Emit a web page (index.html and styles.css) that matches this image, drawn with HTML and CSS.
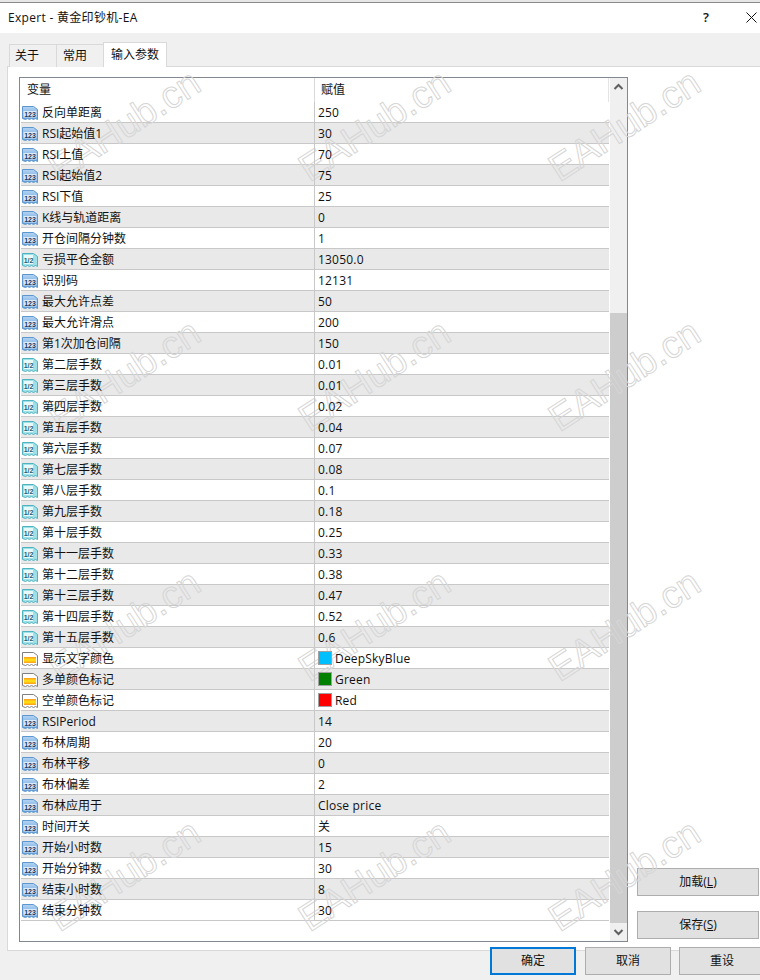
FILE: index.html
```html
<!DOCTYPE html>
<html lang="zh-CN">

<head>
    <meta charset="UTF-8">
    <meta name="viewport" content="width=device-width, initial-scale=1.0">
    <title>Expert - 黄金印钞机-EA</title>
    <link rel="stylesheet" href="styles.css">
</head>

<body>
    <svg class="defs" width="0" height="0">
        <defs>
            <linearGradient id="blue" x1="0" y1="0" x2="0" y2="1">
                <stop offset="0" stop-color="#b5d4f2" />
                <stop offset="1" stop-color="#5b9ad9" />
            </linearGradient>
            <linearGradient id="flame" x1="0" y1="0" x2="0" y2="1">
                <stop offset="0" stop-color="#ff9a1e" />
                <stop offset=".5" stop-color="#ffe812" />
                <stop offset="1" stop-color="#ff9a1e" />
            </linearGradient>
            <symbol id="i-int" viewBox="0 0 16 16">
                <path d="M.5 1.500h11l4 3v10l-2-1-2 1-2-1-2 1-2-1-2 1-3-1z" fill="url(#blue)" stroke="#5e96cf" />
                <rect x="1.500" y="6" width="13" height="6.500" fill="#dcebfa" />
                <text x="8" y="11.700" class="icon-txt icon-int">123</text>
            </symbol>
            <symbol id="i-dbl" viewBox="0 0 16 16">
                <path d="M.5 1.500h11l4 3v10l-2-1-2 1-2-1-2 1-2-1-2 1-3-1z" fill="#9fdfe6" stroke="#4fb2c0" />
                <rect x="2" y="3" width="9" height="9" fill="#e6f9fb" />
                <text x="6.500" y="10.500" class="icon-txt icon-dbl">1/2</text>
            </symbol>
            <symbol id="i-clr" viewBox="0 0 16 16">
                <path d="M.5 1.500h11l4 3v10l-2-1-2 1-2-1-2 1-2-1-2 1-3-1z" fill="#fff" stroke="#808080" />
                <rect x="2" y="6" width="12" height="6" fill="url(#flame)" />
            </symbol>
        </defs>
    </svg>

    <div class="dialog">
        <div class="topline"></div>
        <div class="titlebar">
            <span class="title">Expert - 黄金印钞机-EA</span>
            <span class="help">?</span>
            <svg class="close" width="11" height="11" viewBox="0 0 11 11">
                <path d="M.5.500l10 10M10.500.500l-10 10" stroke="#111" fill="none" />
            </svg>
        </div>

        <div class="tabs">
            <div class="tab">关于</div>
            <div class="tab">常用</div>
            <div class="tab active">输入参数</div>
        </div>

        <div class="panel">
            <div class="list">
                <div class="table">
                    <div class="thead">
                        <div class="th th-name">变量</div>
                        <div class="th th-val">赋值</div>
                    </div>
                    <div class="row"><div class="name"><svg class="ico"><use href="#i-int" /></svg>反向单距离</div><div class="val">250</div></div>
                    <div class="row"><div class="name"><svg class="ico"><use href="#i-int" /></svg>RSI起始值1</div><div class="val">30</div></div>
                    <div class="row"><div class="name"><svg class="ico"><use href="#i-int" /></svg>RSI上值</div><div class="val">70</div></div>
                    <div class="row"><div class="name"><svg class="ico"><use href="#i-int" /></svg>RSI起始值2</div><div class="val">75</div></div>
                    <div class="row"><div class="name"><svg class="ico"><use href="#i-int" /></svg>RSI下值</div><div class="val">25</div></div>
                    <div class="row"><div class="name"><svg class="ico"><use href="#i-int" /></svg>K线与轨道距离</div><div class="val">0</div></div>
                    <div class="row"><div class="name"><svg class="ico"><use href="#i-int" /></svg>开仓间隔分钟数</div><div class="val">1</div></div>
                    <div class="row"><div class="name"><svg class="ico"><use href="#i-dbl" /></svg>亏损平仓金额</div><div class="val">13050.0</div></div>
                    <div class="row"><div class="name"><svg class="ico"><use href="#i-int" /></svg>识别码</div><div class="val">12131</div></div>
                    <div class="row"><div class="name"><svg class="ico"><use href="#i-int" /></svg>最大允许点差</div><div class="val">50</div></div>
                    <div class="row"><div class="name"><svg class="ico"><use href="#i-int" /></svg>最大允许滑点</div><div class="val">200</div></div>
                    <div class="row"><div class="name"><svg class="ico"><use href="#i-int" /></svg>第1次加仓间隔</div><div class="val">150</div></div>
                    <div class="row"><div class="name"><svg class="ico"><use href="#i-dbl" /></svg>第二层手数</div><div class="val">0.01</div></div>
                    <div class="row"><div class="name"><svg class="ico"><use href="#i-dbl" /></svg>第三层手数</div><div class="val">0.01</div></div>
                    <div class="row"><div class="name"><svg class="ico"><use href="#i-dbl" /></svg>第四层手数</div><div class="val">0.02</div></div>
                    <div class="row"><div class="name"><svg class="ico"><use href="#i-dbl" /></svg>第五层手数</div><div class="val">0.04</div></div>
                    <div class="row"><div class="name"><svg class="ico"><use href="#i-dbl" /></svg>第六层手数</div><div class="val">0.07</div></div>
                    <div class="row"><div class="name"><svg class="ico"><use href="#i-dbl" /></svg>第七层手数</div><div class="val">0.08</div></div>
                    <div class="row"><div class="name"><svg class="ico"><use href="#i-dbl" /></svg>第八层手数</div><div class="val">0.1</div></div>
                    <div class="row"><div class="name"><svg class="ico"><use href="#i-dbl" /></svg>第九层手数</div><div class="val">0.18</div></div>
                    <div class="row"><div class="name"><svg class="ico"><use href="#i-dbl" /></svg>第十层手数</div><div class="val">0.25</div></div>
                    <div class="row"><div class="name"><svg class="ico"><use href="#i-dbl" /></svg>第十一层手数</div><div class="val">0.33</div></div>
                    <div class="row"><div class="name"><svg class="ico"><use href="#i-dbl" /></svg>第十二层手数</div><div class="val">0.38</div></div>
                    <div class="row"><div class="name"><svg class="ico"><use href="#i-dbl" /></svg>第十三层手数</div><div class="val">0.47</div></div>
                    <div class="row"><div class="name"><svg class="ico"><use href="#i-dbl" /></svg>第十四层手数</div><div class="val">0.52</div></div>
                    <div class="row"><div class="name"><svg class="ico"><use href="#i-dbl" /></svg>第十五层手数</div><div class="val">0.6</div></div>
                    <div class="row"><div class="name"><svg class="ico"><use href="#i-clr" /></svg>显示文字颜色</div><div class="val val-clr"><span class="swatch sw-sky"></span>DeepSkyBlue</div></div>
                    <div class="row"><div class="name"><svg class="ico"><use href="#i-clr" /></svg>多单颜色标记</div><div class="val val-clr"><span class="swatch sw-green"></span>Green</div></div>
                    <div class="row"><div class="name"><svg class="ico"><use href="#i-clr" /></svg>空单颜色标记</div><div class="val val-clr"><span class="swatch sw-red"></span>Red</div></div>
                    <div class="row"><div class="name"><svg class="ico"><use href="#i-int" /></svg>RSIPeriod</div><div class="val">14</div></div>
                    <div class="row"><div class="name"><svg class="ico"><use href="#i-int" /></svg>布林周期</div><div class="val">20</div></div>
                    <div class="row"><div class="name"><svg class="ico"><use href="#i-int" /></svg>布林平移</div><div class="val">0</div></div>
                    <div class="row"><div class="name"><svg class="ico"><use href="#i-int" /></svg>布林偏差</div><div class="val">2</div></div>
                    <div class="row"><div class="name"><svg class="ico"><use href="#i-int" /></svg>布林应用于</div><div class="val">Close price</div></div>
                    <div class="row"><div class="name"><svg class="ico"><use href="#i-int" /></svg>时间开关</div><div class="val">关</div></div>
                    <div class="row"><div class="name"><svg class="ico"><use href="#i-int" /></svg>开始小时数</div><div class="val">15</div></div>
                    <div class="row"><div class="name"><svg class="ico"><use href="#i-int" /></svg>开始分钟数</div><div class="val">30</div></div>
                    <div class="row"><div class="name"><svg class="ico"><use href="#i-int" /></svg>结束小时数</div><div class="val">8</div></div>
                    <div class="row"><div class="name"><svg class="ico"><use href="#i-int" /></svg>结束分钟数</div><div class="val">30</div></div>
                </div>
                <div class="scrollbar">
                    <svg class="arrow" width="17" height="20" viewBox="0 0 17 20">
                        <path d="M4.500 11l4-4 4 4" fill="none" stroke="#606060" stroke-width="2" />
                    </svg>
                    <div class="track"><div class="thumb"></div></div>
                    <svg class="arrow" width="17" height="18" viewBox="0 0 17 18">
                        <path d="M4.500 7l4 4 4-4" fill="none" stroke="#606060" stroke-width="2" />
                    </svg>
                </div>
            </div>
            <div class="side">
                <button class="btn">加载(<u>L</u>)</button>
                <button class="btn">保存(<u>S</u>)</button>
            </div>
        </div>

        <div class="footer">
            <button class="btn btn-ok">确定</button>
            <button class="btn btn-cancel">取消</button>
            <button class="btn btn-reset">重设</button>
        </div>
    </div>

    <div class="marks">
        <span class="mark">EAHub.cn</span><span class="mark">EAHub.cn</span><span class="mark">EAHub.cn</span>
        <span class="mark">EAHub.cn</span><span class="mark">EAHub.cn</span><span class="mark">EAHub.cn</span>
        <span class="mark">EAHub.cn</span><span class="mark">EAHub.cn</span><span class="mark">EAHub.cn</span>
        <span class="mark">EAHub.cn</span><span class="mark">EAHub.cn</span><span class="mark">EAHub.cn</span>
    </div>
</body>

</html>
```

FILE: styles.css
```css
body {
    font-family: "Open Sans", "Noto Sans CJK SC", sans-serif;
    font-size: 12px;
    margin: 0;
    width: 760px;
    height: 980px;
    overflow: hidden;
    position: relative;
    color: #111;
    background: #f0f0f0;
}

.defs {
    position: absolute;
}

.icon-txt {
    font-family: "Liberation Sans", sans-serif;
    font-weight: bold;
    text-anchor: middle;
}

.icon-int {
    font-size: 7px;
    fill: #123a6b;
}

.icon-dbl {
    font-size: 7px;
    fill: #1d5f70;
}

.topline {
    height: 2px;
    background: #e6e6e6;
    border-bottom: 1px solid #8a8a8a;
}

.titlebar {
    height: 30px;
    box-sizing: border-box;
    padding: 0 0 2px 8px;
    background: #fff;
    display: flex;
    align-items: center;
}

.title {
    flex: 1;
    letter-spacing: 0.3px;
}

.help {
    font-size: 13px;
    margin-right: 37px;
    font-weight: 600;
}

.close {
    margin-right: 3px;
}

.tabs {
    display: flex;
    align-items: flex-end;
    height: 33px;
    padding-left: 9px;
    position: relative;
}

.tab {
    width: 40px;
    height: 22px;
    line-height: 21px;
    padding-left: 6px;
    background: #f0f0f0;
    border: 1px solid #d9d9d9;
    border-bottom: none;
    border-right: none;
    margin-bottom: -1px;
}

.tab:first-child {
    width: 41px;
    padding-left: 5px;
}

.tab.active {
    width: 55px;
    height: 24px;
    line-height: 23px;
    padding-left: 7px;
    background: #fff;
    border-right: 1px solid #d9d9d9;
    position: relative;
    z-index: 1;
}

.panel {
    margin-left: 7px;
    height: 885px;
    box-sizing: border-box;
    background: #fff;
    border: 1px solid #d9d9d9;
    border-right: none;
    padding: 10px 0 8px 11px;
    display: flex;
}

.list {
    width: 609px;
    flex: none;
    box-sizing: border-box;
    border: 1px solid #828790;
    display: flex;
    padding-left: 1px;
}

.table {
    width: 589px;
}

.thead {
    display: flex;
    height: 24px;
    line-height: 24px;
    border-right: 1px solid #e4e4e4;
}

.th-name {
    width: 294px;
    padding-left: 6px;
    box-sizing: border-box;
    border-right: 1px solid #d9d9d9;
}

.th-val {
    padding-left: 6px;
}

.row {
    display: flex;
    height: 21px;
    box-sizing: border-box;
    border-bottom: 1px solid #c8c8c8;
    line-height: 20px;
}

.row:nth-child(odd) {
    background: #e9e9e9;
}

/* text and swatches stay above the watermark, row fills stay below it */
.name,
.val {
    position: relative;
    z-index: 2;
}

.name {
    width: 294px;
    flex: none;
    box-sizing: border-box;
    border-right: 1px solid #c8c8c8;
    display: flex;
    align-items: center;
    gap: 4px;
    padding: 2px 0 0 1px;
}

.ico {
    width: 16px;
    height: 16px;
    flex: none;
}

.val {
    padding: 1px 0 0 3px;
    letter-spacing: 0.2px;
}

.val-clr {
    display: flex;
    align-items: center;
    gap: 3px;
    padding-top: 2px;
}

.swatch {
    width: 14px;
    height: 14px;
    margin-top: -2px;
    box-sizing: border-box;
    border: 1px solid #a0a0a0;
}

.sw-sky {
    background: #00bfff;
}

.sw-green {
    background: #008000;
}

.sw-red {
    background: #ff0000;
}

.scrollbar {
    width: 17px;
    margin-left: 1px;
    background: #f0f0f0;
    display: flex;
    flex-direction: column;
}

.arrow {
    flex: none;
}

.track {
    flex: 1;
    display: flex;
    flex-direction: column;
    justify-content: flex-end;
}

.thumb {
    height: 610px;
    background: #cdcdcd;
}

.side {
    margin-left: 9px;
    width: 122px;
    display: flex;
    flex-direction: column;
    justify-content: flex-end;
    gap: 15px;
    padding-bottom: 3px;
}

.btn {
    font: inherit;
    color: #111;
    height: 28px;
    padding: 0 0 2px;
    background: #e1e1e1;
    border: 1px solid #adadad;
    box-sizing: border-box;
    flex: none;
}

.footer {
    display: flex;
    margin-top: -4px;
    padding-left: 490px;
    position: relative;
}

.btn-ok {
    width: 86px;
    border: 2px solid #0078d7;
    margin-right: 9px;
}

.btn-cancel {
    width: 86px;
    margin-right: 8px;
}

.btn-reset {
    width: 86px;
}

.marks {
    position: absolute;
    top: 0;
    left: 0;
    z-index: 1;
    display: grid;
    grid-template-columns: repeat(3, 250px);
    grid-auto-rows: 250px;
    place-items: center;
    pointer-events: none;
}

.mark {
    font-family: "Liberation Sans", sans-serif;
    font-size: 38px;
    white-space: nowrap;
    color: transparent;
    -webkit-text-stroke: 1px #d6d6d6;
    transform: rotate(-33deg);
}
```
